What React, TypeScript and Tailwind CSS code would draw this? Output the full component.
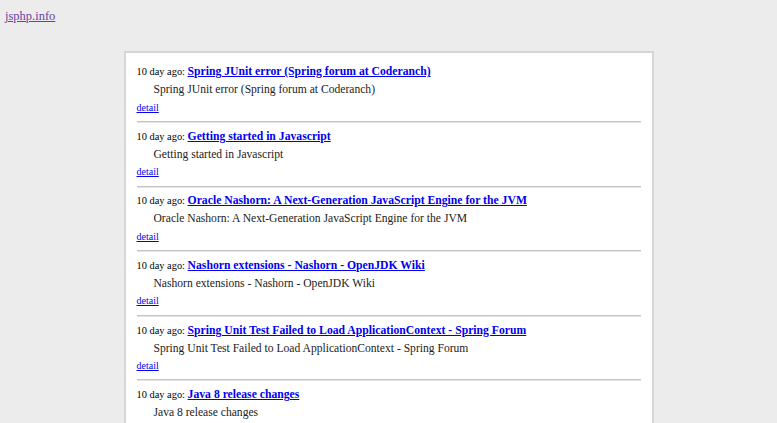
import React from "react";

const items = [
  "Spring JUnit error (Spring forum at Coderanch)",
  "Getting started in Javascript",
  "Oracle Nashorn: A Next-Generation JavaScript Engine for the JVM",
  "Nashorn extensions - Nashorn - OpenJDK Wiki",
  "Spring Unit Test Failed to Load ApplicationContext - Spring Forum",
  "Java 8 release changes",
  "Java SE 8 Date and Time",
];

export default function App() {
  return (
    <div className="min-h-screen bg-[#ececec] font-['Liberation_Serif',serif] text-black">
      <div className="h-[51px] pl-[5px] pt-[3px]">
        <a href="#" className="text-[12.5px] leading-[16px] text-[#6b3fa0] underline">
          jsphp.info
        </a>
      </div>
      <div className="mx-auto w-[530px] border-2 border-[#d6d6d6] bg-white px-[11px] pt-[10px]">
        {items.map((t) => (
          <div key={t}>
            <div className="flex h-[18px] items-center whitespace-nowrap">
              <span className="text-[10.4px]">10 day ago:&nbsp;</span>
              <a href="#" className="text-[11.7px] font-bold text-[#0000ee] underline">
                {t}
              </a>
            </div>
            <div className="flex h-[18px] items-center whitespace-nowrap pl-[17px] text-[11.6px] text-[#222]">
              {t}
            </div>
            <div className="flex h-[16px] items-center">
              <a href="#" className="text-[10px] text-[#0000ee] underline">
                detail
              </a>
            </div>
            <div className="mt-[6px] mb-[4.6px] h-[2px] border-t border-b border-t-[#c4c4c4] border-b-[#e4e4e4]" />
          </div>
        ))}
      </div>
    </div>
  );
}
